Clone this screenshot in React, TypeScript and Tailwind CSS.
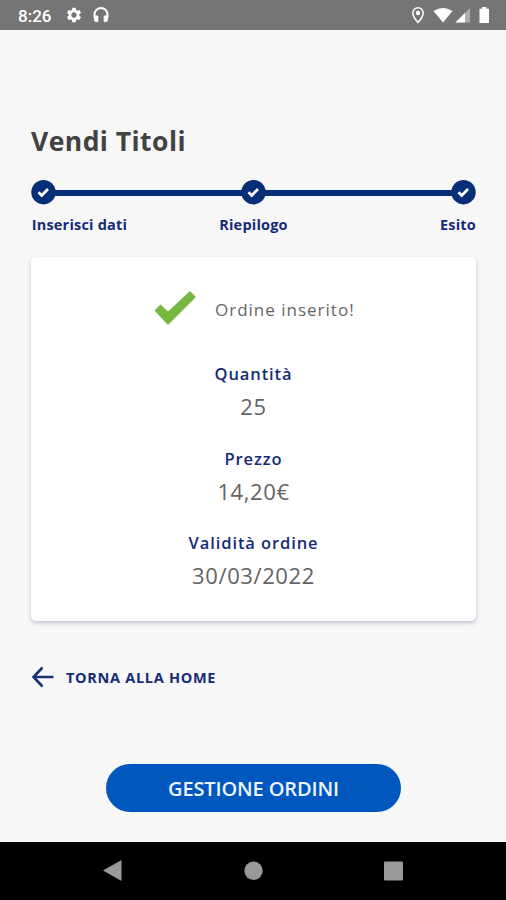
import { MdSettings } from "react-icons/md";

function StatusBar() {
  return (
    <header className="flex h-[30px] items-center justify-between bg-[#757575] pl-[18px] pr-[16px] text-white">
      <div className="flex items-center">
        <span className="w-[47px] pt-px font-[Roboto] text-[17px] font-medium leading-[30px]">8:26</span>
        <MdSettings size={18} />
        <svg className="ml-[9px]" width="18" height="18" viewBox="0 0 18 18" fill="none" stroke="currentColor" strokeWidth="2">
          <path d="M2.500 12V8.500a6.500 6.500 0 0 1 13 0V12" />
          <path d="M2.600 10h3.200v5.600H4.200a1.600 1.600 0 0 1-1.600-1.600zM15.400 10h-3.200v5.600h1.600a1.600 1.600 0 0 0 1.600-1.600z" fill="currentColor" strokeWidth="1" />
        </svg>
      </div>
      <svg width="79" height="18" viewBox="0 0 79 18" fill="currentColor">
        <path d="M7 1.800a5.200 5.200 0 0 0-5.200 5.200C1.800 10.800 7 16.500 7 16.500S12.200 10.800 12.200 7A5.200 5.200 0 0 0 7 1.800z" fill="none" stroke="currentColor" strokeWidth="1.500" />
        <circle cx="7" cy="7" r="2.200" />
        <path d="M22.500 5Q32 -1 41.500 5L32 16.500z" />
        <path d="M59 2L44.500 16.500H59z" opacity=".4" />
        <path d="M54 7L44.500 16.500H54z" />
        <path d="M68.500 2.800h2.500V1h4.500v1.800h2.500V17h-9.500z" />
      </svg>
    </header>
  );
}

function StepDot() {
  return (
    <svg className="shrink-0" width="25" height="25" viewBox="0 0 25 25">
      <circle cx="12.500" cy="12.200" r="12.200" fill="#062f78" />
      <path d="M7.500 12.300l3.200 3.200 6.300-6.500" fill="none" stroke="#fff" strokeWidth="2.700" />
    </svg>
  );
}

function Stepper() {
  return (
    <div className="mt-[19px] pl-[31px] pr-[30px]">
      <div className="flex h-[25px] items-center">
        <StepDot />
        <div className="-mx-1 h-[6px] flex-1 bg-[#062f78]" />
        <StepDot />
        <div className="-mx-1 h-[6px] flex-1 bg-[#062f78]" />
        <StepDot />
      </div>
      <div className="mt-[10px] grid h-5 grid-cols-3 text-[14.500px] font-bold leading-5 tracking-[0.2px] text-[#142c76]">
        <span className="pl-[0.700px]">Inserisci dati</span>
        <span className="text-center">Riepilogo</span>
        <span className="text-right">Esito</span>
      </div>
    </div>
  );
}

function Detail({ label, value }: { label: string; value: string }) {
  return (
    <div className="flex h-[84.500px] flex-col items-center">
      <dt className="text-[16.500px] font-semibold leading-[30px] tracking-[0.9px] text-[#142c76]">{label}</dt>
      <dd className="mt-[2px] text-[22px] font-medium leading-[30px] tracking-[0.6px] text-[#646464]">{value}</dd>
    </div>
  );
}

export default function App() {
  return (
    <div className="flex h-[900px] w-[506px] flex-col overflow-hidden bg-[#f7f7f7] font-['Open_Sans',sans-serif]">
      <StatusBar />
      <main className="flex flex-1 flex-col">
        <h1 className="mt-[91px] pl-[31px] text-[26.500px] font-bold leading-[40px] tracking-[0.45px] text-[#424242]">Vendi Titoli</h1>
        <Stepper />
        <section className="ml-[31px] mr-[30px] mt-[22px] h-[364px] rounded-[5px] bg-white shadow-[0_2px_4px_rgba(50,60,110,0.28)]">
          <div className="flex h-[102px] items-center pl-[122px]">
            <svg width="45" height="36" viewBox="0 0 45 36">
              <path d="M1.500 20.500L7.500 14.500L15 21.500L37 1L43 7L15 35z" fill="#76b73f" />
            </svg>
            <span className="ml-[17px] pt-1 text-[17px] font-medium tracking-[1px] text-[#666]">Ordine inserito!</span>
          </div>
          <dl>
            <Detail label="Quantità" value="25" />
            <Detail label="Prezzo" value="14,20€" />
            <Detail label="Validità ordine" value="30/03/2022" />
          </dl>
        </section>
        <a className="ml-[31px] mt-[41px] flex h-[30px] items-center text-[#142c76]">
          <svg width="23" height="22" viewBox="0 0 23 22" fill="none" stroke="#173478" strokeWidth="2.600">
            <path d="M11.500 1.500L2.500 11l9 9.500M2.500 11H22.500" />
          </svg>
          <span className="ml-3 pt-[2px] text-[14.500px] font-bold tracking-[0.7px]">TORNA ALLA HOME</span>
        </a>
        <button className="mt-[72px] h-[48px] w-[295px] self-center rounded-full bg-[#0057bd] pl-px text-[20px] font-semibold leading-[49px] tracking-[-0.130px] text-[#edf4ff]">GESTIONE ORDINI</button>
      </main>
      <nav className="h-[58px] bg-black">
        <svg width="506" height="58" viewBox="0 0 506 58" fill="#999">
          <path d="M103 28.500L121.500 18V39z" />
          <circle cx="253.500" cy="28.700" r="9.200" />
          <rect x="384" y="19.500" width="19" height="19" rx="1" />
        </svg>
      </nav>
    </div>
  );
}
